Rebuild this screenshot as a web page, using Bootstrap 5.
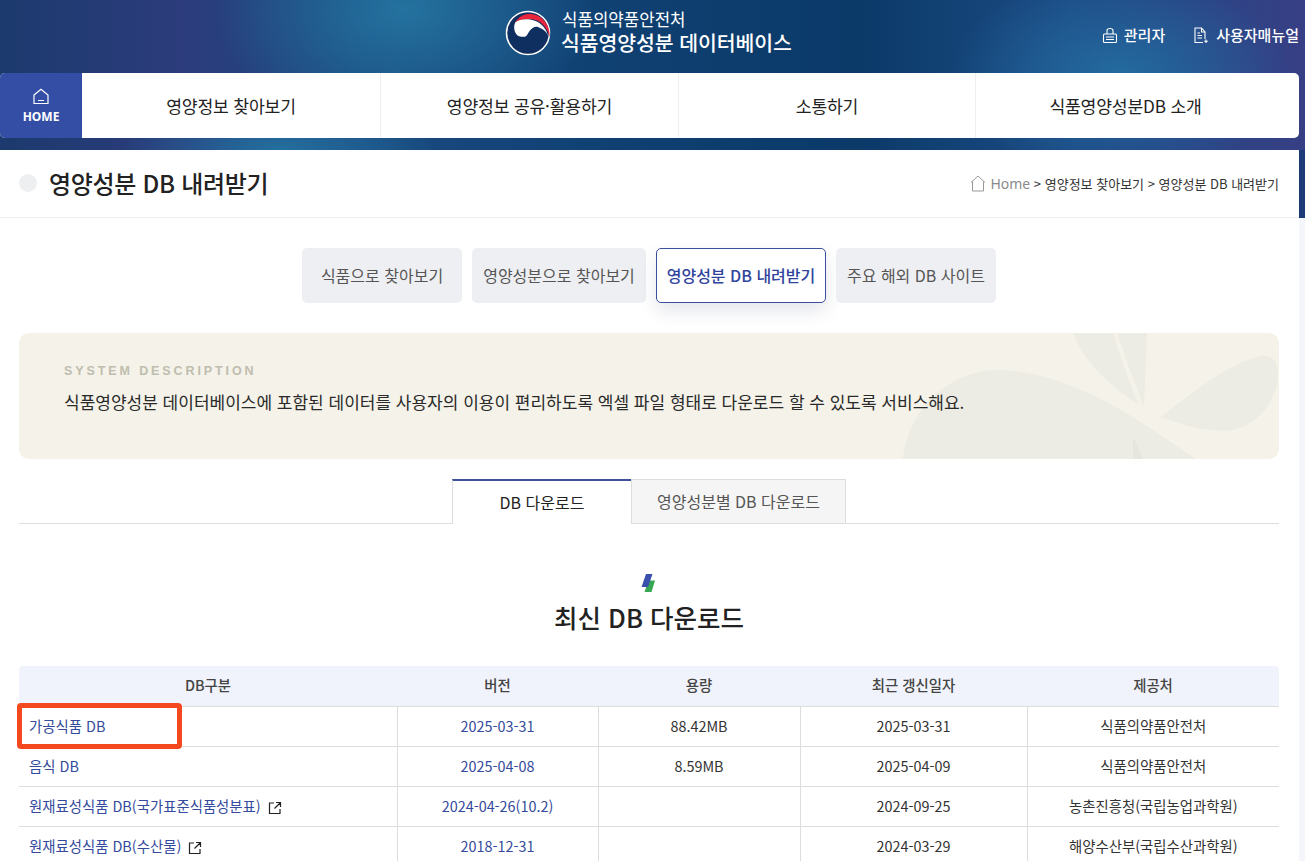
<!DOCTYPE html>
<html lang="ko">
<head>
    <meta charset="UTF-8">
    <meta name="viewport" content="width=device-width, initial-scale=1.0">
    <title>영양성분 DB 내려받기</title>
    <link href="https://cdn.jsdelivr.net/npm/bootstrap@5.3.2/dist/css/bootstrap.min.css" rel="stylesheet">
    <style>
        html, body {
            height: 861px;
            overflow: hidden;
        }

        body {
            font-family: "Noto Sans CJK KR", "Noto Sans", sans-serif;
            color: #222;
            background: #fff;
        }

        .top-band {
            height: 218px;
            padding-top: 73px;
            position: relative;
            background:
                linear-gradient(180deg, rgba(28, 59, 118, 0) 150px, #1c3b76 150px),
                radial-gradient(ellipse 190px 120px at 405px 10px, #24729f 0%, rgba(36, 114, 159, 0) 100%),
                radial-gradient(ellipse 170px 100px at 1120px 75px, #236ba0 0%, rgba(35, 107, 160, 0) 100%),
                radial-gradient(ellipse 160px 50px at 280px 150px, #23709f 0%, rgba(35, 112, 159, 0) 100%),
                linear-gradient(90deg, #1c3a6e 0%, #2c3c7c 14%, #1a4a80 28%, #0e3f70 50%, #0b3a69 66%, #1c4b84 82%, #373f85 100%);
        }

        .brand-block {
            position: absolute;
            left: 505px;
            top: 10px;
            gap: 10px;
            color: #fff;
            font-family: "Liberation Sans", "Noto Sans CJK KR", sans-serif;
        }

        .brand-small {
            font-size: 16.8px;
            line-height: 20px;
            margin-left: 1px;
        }

        .brand-big {
            font-size: 20.5px;
            line-height: 25px;
            font-weight: 500;
            letter-spacing: -0.1px;
        }

        .util-links {
            position: absolute;
            right: 6px;
            top: 24px;
            color: #fff;
            font-size: 15px;
            line-height: 22px;
            font-weight: 500;
        }

        .util-icon {
            margin-right: 6px;
        }

        .util-gap {
            margin-right: 28px;
        }

        .main-menu {
            height: 65px;
            margin-right: 6px;
            background: #fff;
            border-radius: 5px;
            overflow: hidden;
        }

        .home-tile {
            width: 82px;
            background: #344ea6;
            font-size: 12px;
            font-weight: 700;
            line-height: 16px;
            padding-top: 2px;
            font-family: "Noto Sans", sans-serif;
        }

        .menu-item {
            width: 298px;
            font-size: 17.2px;
            color: #222;
            border-left: 1px solid #eee;
            letter-spacing: -0.2px;
        }

        .menu-item.no-line {
            border-left: 0;
        }

        .menu-item.short-item {
            width: 297px;
        }

        .menu-item.last-item {
            flex: 1 1 0;
            padding-right: 24px;
        }

        .title-bar {
            height: 68px;
            margin: 12px 6px 0 0;
            padding: 0 20px 0 19px;
            background: #fff;
            border-bottom: 1px solid #eee;
        }

        .title-dot {
            width: 18px;
            height: 18px;
            border-radius: 50%;
            background: #eeeff1;
            margin-right: 12px;
        }

        .title-text {
            font-size: 24px;
            font-weight: 500;
            color: #222;
            margin: 0;
            letter-spacing: -0.3px;
        }

        .crumbs {
            font-size: 13px;
            color: #333;
        }

        .crumbs .home-word {
            color: #8a8a8a;
            font-size: 14px;
            font-family: "Noto Sans", sans-serif;
        }

        .side-strip {
            position: absolute;
            right: 0;
            top: 218px;
            bottom: 0;
            width: 6px;
            background: #f5f6fb;
        }

        .page-body {
            padding: 30px 26px 0 19px;
        }

        .pill-row {
            gap: 10px;
            height: 55px;
            margin-bottom: 30px;
        }

        .pill-link {
            height: 55px;
            padding-bottom: 2px;
            background: #eeeff3;
            border-radius: 5px;
            color: #555;
            font-size: 16px;
            white-space: nowrap;
            text-decoration: none;
        }

        .pill-link.on {
            background: #fff;
            border: 1px solid #3b4f9f;
            color: #2f449c;
            font-weight: 500;
            box-shadow: 0 8px 18px rgba(40, 50, 90, 0.12);
        }

        .desc-box {
            height: 126px;
            background: #f4f2e9;
            border-radius: 10px;
            padding: 29px 45px 0;
            position: relative;
            overflow: hidden;
        }

        .desc-leaf {
            position: absolute;
            right: 0;
            top: 0;
        }

        .desc-label {
            font-family: "Liberation Sans", sans-serif;
            font-size: 12.5px;
            line-height: 18px;
            font-weight: 700;
            letter-spacing: 2.9px;
            color: #bfbdae;
            position: relative;
        }

        .desc-copy {
            font-size: 17px;
            line-height: 26px;
            margin-top: 9px;
            color: #2a2a2a;
            position: relative;
        }

        .tab-strip {
            margin-top: 20px;
            height: 45px;
            border-bottom: 1px solid #ddd;
            padding-left: 433px;
        }

        .tab-first {
            width: 179px;
            height: 45px;
            padding-bottom: 2px;
            background: #fff;
            border-top: 2px solid #3f5198;
            border-left: 1px solid #ddd;
            font-size: 16px;
            color: #222;
        }

        .tab-second {
            width: 215px;
            height: 45px;
            padding-bottom: 2px;
            background: #f5f5f5;
            border: 1px solid #ddd;
            font-size: 16px;
            color: #555;
        }

        .section-head {
            margin-top: 49px;
            height: 93px;
        }

        .section-head h2 {
            font-size: 25.5px;
            line-height: 36px;
            font-weight: 500;
            margin: 6px 0 0;
            color: #222;
        }

        .db-table {
            width: 100%;
            table-layout: fixed;
            border-collapse: collapse;
            font-size: 14.4px;
        }

        .db-table th {
            background: #f0f3fb;
            height: 40px;
            font-weight: 500;
            color: #444;
            text-align: center;
            border-bottom: 1px solid #ddd;
            padding-bottom: 2px;
        }

        .db-table th:first-child {
            border-top-left-radius: 4px;
        }

        .db-table th:last-child {
            border-top-right-radius: 4px;
        }

        .db-table td {
            height: 40px;
            border-bottom: 1px solid #ddd;
            border-left: 1px solid #ddd;
            text-align: center;
            color: #333;
            padding: 0 0 1px;
        }

        .db-table td:first-child {
            border-left: 0;
            text-align: left;
            padding-left: 10px;
        }

        .db-table td.blue-cell {
            color: #344a9c;
        }

        .out-icon {
            margin-left: 3px;
            vertical-align: -3px;
        }

        .red-frame {
            position: absolute;
            left: 17px;
            top: 703px;
            width: 165px;
            height: 46px;
            border: 5px solid #f4491f;
            border-radius: 4px;
        }
    </style>
</head>
<body>
    <header class="top-band">
        <div class="brand-block d-flex align-items-center">
            <svg width="46" height="46" viewBox="0 0 46 46" class="flex-shrink-0">
                <circle cx="23" cy="23" r="21.500" fill="#0f2f60" stroke="#fff" stroke-width="1.500"/>
                <path d="M10.300 12.300C14 6.500 19 4 24.700 4 36 4 45.500 14 44.700 27.300 42.500 18 36 9 24.700 9c-5 0-10 1-14.400 3.300z" fill="#e8253a"/>
                <path d="M10.300 12.300C14 9.500 20 8.800 26.300 9.700 34 11 41 17 43 25.700 41.500 21.500 38 19 35 18c-1.500-.8-2.500-1.300-3.700-1.300-2.500 0-4.800 1.700-6.600 4-1.800 2.500-3 6-5 6-3 .5-5-.3-6.700-1C10.500 24.500 7.500 18 10.300 12.300z" fill="#fff"/>
            </svg>
            <div>
                <div class="brand-small">식품의약품안전처</div>
                <div class="brand-big">식품영양성분 데이터베이스</div>
            </div>
        </div>
        <div class="util-links d-flex align-items-center">
            <svg width="16" height="17" viewBox="0 0 16 17" fill="none" stroke="#fff" stroke-width="1.100" class="util-icon">
                <path d="M5 7V3.500C5 2 6 1.500 8 1.500s3 .5 3 2V7"/>
                <rect x="1.500" y="7" width="13" height="8.500" rx="1"/>
                <path d="M4 10h8M4 12.500h8"/>
            </svg>
            <span class="util-gap">관리자</span>
            <svg width="17" height="17" viewBox="0 0 17 17" fill="none" stroke="#fff" stroke-width="1.100" class="util-icon">
                <path d="M12 12V5L8.500 1H2v14.500h8"/>
                <path d="M8.500 1v4H12M4.500 6h2.500M4.500 8.500h4.500M4.500 11h4.500M13 12.500v3.500M11.200 14.300h3.600"/>
            </svg>
            <span>사용자매뉴얼</span>
        </div>
        <nav class="main-menu d-flex">
            <a class="home-tile d-flex flex-column align-items-center justify-content-center text-decoration-none text-white">
                <svg width="16" height="17" viewBox="0 0 16 17" fill="none" stroke="#fff" stroke-width="1.200" class="mb-1">
                    <path d="M1 7L8 1.200 15 7v8.500H1zM5 12.500h6"/>
                </svg>
                HOME
            </a>
            <div class="menu-item no-line d-flex align-items-center justify-content-center">영양정보 찾아보기</div>
            <div class="menu-item d-flex align-items-center justify-content-center">영양정보 공유·활용하기</div>
            <div class="menu-item short-item d-flex align-items-center justify-content-center">소통하기</div>
            <div class="menu-item last-item d-flex align-items-center justify-content-center">식품영양성분DB 소개</div>
        </nav>
        <section class="title-bar d-flex align-items-center justify-content-between">
            <div class="d-flex align-items-center">
                <span class="title-dot"></span>
                <h1 class="title-text">영양성분 DB 내려받기</h1>
            </div>
            <div class="crumbs d-flex align-items-center">
                <svg width="16" height="17" viewBox="0 0 16 17" fill="none" stroke="#999" stroke-width="1" class="me-1">
                    <path d="M1 7.500L8 1l7 6.500M2.500 6.500v9.500h11V6.500"/>
                </svg>
                <span class="home-word">Home</span>&nbsp;&gt; 영양정보 찾아보기 &gt; 영양성분 DB 내려받기
            </div>
        </section>
    </header>

    <div class="side-strip"></div>

    <main class="page-body">
        <div class="pill-row d-flex justify-content-center">
            <a class="pill-link d-flex align-items-center justify-content-center" style="width: 160px">식품으로 찾아보기</a>
            <a class="pill-link d-flex align-items-center justify-content-center" style="width: 174px">영양성분으로 찾아보기</a>
            <a class="pill-link on d-flex align-items-center justify-content-center" style="width: 170px">영양성분 DB 내려받기</a>
            <a class="pill-link d-flex align-items-center justify-content-center" style="width: 160px">주요 해외 DB 사이트</a>
        </div>

        <div class="desc-box">
            <svg class="desc-leaf" width="380" height="126" viewBox="0 0 380 126">
                <path d="M4 126C10 75 50 38 98 37c50 0 100 25 136 47 25 16 45 30 63 42z" fill="#edece4"/>
                <path d="M174 0h40c8 25 17 50 26 72C215 55 188 35 174 0z" fill="#edece4"/>
                <path d="M218 0h30l-3 74C236 50 226 25 218 0z" fill="#edece4"/>
                <path d="M262 84c30-24 70-55 100-61 10-2 16 5 17 17 0 22-15 50-45 57-25 3-50-5-72-13z" fill="#edece4"/>
                <path d="M234 103l10 23h-10z" fill="#e7e6de"/>
            </svg>
            <div class="desc-label">SYSTEM DESCRIPTION</div>
            <p class="desc-copy mb-0">식품영양성분 데이터베이스에 포함된 데이터를 사용자의 이용이 편리하도록 엑셀 파일 형태로 다운로드 할 수 있도록 서비스해요.</p>
        </div>

        <div class="tab-strip d-flex">
            <div class="tab-first d-flex align-items-center justify-content-center">DB 다운로드</div>
            <div class="tab-second d-flex align-items-center justify-content-center">영양성분별 DB 다운로드</div>
        </div>

        <div class="section-head text-center">
            <svg width="16" height="20" viewBox="0 0 16 20" class="d-block mx-auto">
                <path d="M7.500 7.500H14L10.500 19H3.500z" fill="#36a853"/>
                <path d="M5 1h6.500L7 14H.5z" fill="#3a50ac"/>
            </svg>
            <h2>최신 DB 다운로드</h2>
        </div>

        <table class="db-table">
            <colgroup>
                <col style="width: 378px">
                <col style="width: 201px">
                <col style="width: 202px">
                <col style="width: 227px">
                <col>
            </colgroup>
            <thead>
                <tr><th>DB구분</th><th>버전</th><th>용량</th><th>최근 갱신일자</th><th>제공처</th></tr>
            </thead>
            <tbody>
                <tr>
                    <td class="blue-cell">가공식품 DB</td>
                    <td class="blue-cell">2025-03-31</td>
                    <td>88.42MB</td>
                    <td>2025-03-31</td>
                    <td>식품의약품안전처</td>
                </tr>
                <tr>
                    <td class="blue-cell">음식 DB</td>
                    <td class="blue-cell">2025-04-08</td>
                    <td>8.59MB</td>
                    <td>2025-04-09</td>
                    <td>식품의약품안전처</td>
                </tr>
                <tr>
                    <td class="blue-cell">원재료성식품 DB(국가표준식품성분표)
                        <svg class="out-icon" width="14" height="14" viewBox="0 0 14 14" fill="none" stroke="#222" stroke-width="1.200"><path d="M6 2H1.500v10.500H12V8M8 1.500h4.500V6M12.500 1.500L6.500 7.500"/></svg>
                    </td>
                    <td class="blue-cell">2024-04-26(10.2)</td>
                    <td></td>
                    <td>2024-09-25</td>
                    <td>농촌진흥청(국립농업과학원)</td>
                </tr>
                <tr>
                    <td class="blue-cell">원재료성식품 DB(수산물)
                        <svg class="out-icon" width="14" height="14" viewBox="0 0 14 14" fill="none" stroke="#222" stroke-width="1.200"><path d="M6 2H1.500v10.500H12V8M8 1.500h4.500V6M12.500 1.500L6.500 7.500"/></svg>
                    </td>
                    <td class="blue-cell">2018-12-31</td>
                    <td></td>
                    <td>2024-03-29</td>
                    <td>해양수산부(국립수산과학원)</td>
                </tr>
            </tbody>
        </table>
    </main>

    <div class="red-frame"></div>
</body>
</html>
